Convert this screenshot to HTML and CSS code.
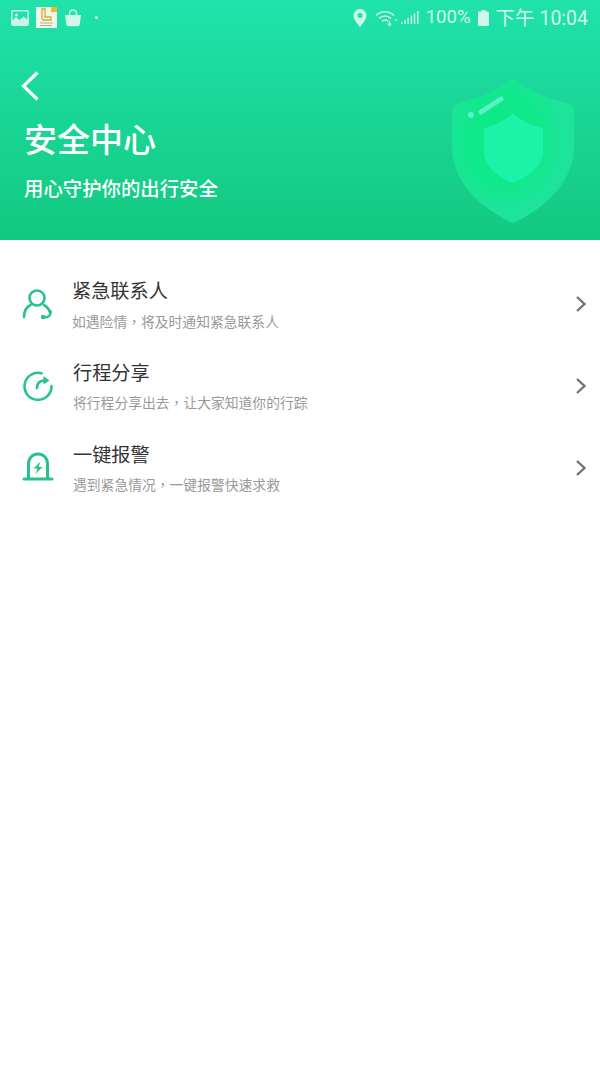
FILE: index.html
```html
<!DOCTYPE html>
<html lang="zh-CN">
<head>
<meta charset="utf-8">
<title>安全中心</title>
<link rel="stylesheet" href="styles.css">
</head>
<body>
<div class="page">
  <header class="hero">
    <div class="status">
      <div class="status-left">
        <svg class="ic-photo" viewBox="0 0 18 16"><rect x=".8" y=".8" width="16.4" height="14.4" rx="1.5" fill="none" stroke="#c9f6e6" stroke-width="1.6"/><path d="M1 15V11l4-4 3.500 3 4-3.500L17 10v5z" fill="#c9f6e6"/><circle cx="5.500" cy="5" r="1.500" fill="#c9f6e6"/></svg>
        <svg class="ic-app" viewBox="0 0 21 21"><rect width="21" height="21" fill="#f3f6ea"/><path d="M6 2h3v8h6v3H7l-1-2z" fill="none" stroke="#dba92e" stroke-width="1.300"/><path d="M4 16h13M4 18.500h12" stroke="#a9b58c" stroke-width="1"/><rect x="15" y="0" width="6" height="5" fill="#f5b92d"/></svg>
        <svg class="ic-bag" viewBox="0 0 18 18"><path d="M1 6h16l-1.300 9.500a2 2 0 0 1-2 1.700H4.300a2 2 0 0 1-2-1.700z" fill="#d2f7ea"/><path d="M5.500 7V4.500a3.500 3.500 0 0 1 7 0V7" fill="none" stroke="#d2f7ea" stroke-width="1.300"/></svg>
        <span class="dot"></span>
      </div>
      <div class="status-right">
        <svg class="ic-pin" viewBox="0 0 14 18"><path fill-rule="evenodd" d="M7 0a6.500 6.500 0 0 1 6.500 6.500C13.500 11 7 18 7 18S.5 11 .5 6.500A6.500 6.500 0 0 1 7 0zm0 4a2.500 2.500 0 1 0 0 5 2.500 2.500 0 0 0 0-5z" fill="#c9f6e6"/></svg>
        <svg class="ic-wifi" viewBox="0 0 24 18"><g fill="none" stroke="#c9f6e6" stroke-width="1.500"><path d="M1 6.500c5-5 13-5 18 0M4 9.500c3.500-3.200 8.500-3.200 12 0M7 12.300c2-1.600 4-1.600 6 0"/></g><path d="M14.500 12v4M12.800 14.500l1.700 2 1.700-2" fill="none" stroke="#c9f6e6" stroke-width="1.200"/><circle cx="21" cy="11" r="1" fill="#c9f6e6"/></svg>
        <svg class="ic-signal" viewBox="0 0 18 14"><g fill="#c9f6e6"><rect x="0" y="11" width="1.500" height="2"/><rect x="3.200" y="9" width="1.500" height="4"/><rect x="6.400" y="7" width="1.500" height="6"/><rect x="9.600" y="4.500" width="1.500" height="8.500"/><rect x="12.800" y="2.500" width="1.500" height="10.500"/><rect x="16" y="0" width="1.500" height="13"/></g></svg>
        <span class="pct">100%</span>
        <svg class="ic-batt" viewBox="0 0 11 16"><path d="M3.500 0h4v1.500H10a1 1 0 0 1 1 1V15a1 1 0 0 1-1 1H1a1 1 0 0 1-1-1V2.500a1 1 0 0 1 1-1h2.500z" fill="#d2f7ea"/></svg>
        <span class="clock">下午 10:04</span>
      </div>
    </div>
    <svg class="back" viewBox="0 0 20 32"><path d="M17.500 2.500 3.500 16l14 13.500" fill="none" stroke="#fff" stroke-width="3.200"/></svg>
    <h1 class="title">安全中心</h1>
    <p class="slogan">用心守护你的出行安全</p>
    <svg class="shield" viewBox="0 0 126 146">
      <defs>
        <radialGradient id="glow" cx=".42" cy=".42" r=".5"><stop offset="0" stop-color="#0bea84"/><stop offset=".55" stop-color="#0fe98a"/><stop offset="1" stop-color="#1de49a"/></radialGradient>
      </defs>
      <path d="M63 0C72 8 92 20 117 25Q124 27 124 33V68C124 106 92 132 63 145 34 132 2 106 2 68V33Q2 27 9 25C34 20 54 8 63 0z" fill="url(#glow)"/>
      <path d="M63 35C70 42 82 48 93 50V74C93 88 78 99 63 105 48 99 34 88 34 74V50C44 48 56 42 63 35z" fill="#1cf2a8"/>
      <path d="M31 34 51 21" stroke="#5cf0c8" stroke-width="5" stroke-linecap="round"/>
      <circle cx="21" cy="37" r="3" fill="#5cf0c8"/>
    </svg>
  </header>
  <main class="list">
    <div class="row">
      <svg class="row-icon" viewBox="0 0 32 32"><g fill="none" stroke="#27c48a" stroke-width="2.600" stroke-linecap="round"><circle cx="15" cy="10" r="7.500"/><path d="M2 29c0-6 2.500-10 6.500-12M22 17c2 1 3.500 2.500 5 5"/></g><path d="M28.500 24c.5 3-2 5.500-6 5.500" fill="none" stroke="#27c48a" stroke-width="2.600" stroke-linecap="round"/><circle cx="21" cy="29" r="2.200" fill="#27c48a"/><circle cx="28" cy="23.500" r="1.800" fill="#27c48a"/></svg>
      <div class="row-text">
        <div class="row-title">紧急联系人</div>
        <div class="row-sub">如遇险情<span class="comma" lang="zh-Hant">，</span>将及时通知紧急联系人</div>
      </div>
      <svg class="chev" viewBox="0 0 12 18"><path d="M2 2l7.500 7L2 16" fill="none" stroke="#6d7273" stroke-width="2.300"/></svg>
    </div>
    <div class="row">
      <svg class="row-icon" viewBox="0 0 32 32"><path d="M19.500 3.300A13.500 13.500 0 1 0 29.500 16" fill="none" stroke="#27c48a" stroke-width="2.600" stroke-linecap="round"/><path d="M15 18c0-4 2-7 7-7.500" fill="none" stroke="#27c48a" stroke-width="2.600" stroke-linecap="round"/><path d="M21.500 6l6 4.500-6 4z" fill="#27c48a"/></svg>
      <div class="row-text">
        <div class="row-title">行程分享</div>
        <div class="row-sub">将行程分享出去<span class="comma" lang="zh-Hant">，</span>让大家知道你的行踪</div>
      </div>
      <svg class="chev" viewBox="0 0 12 18"><path d="M2 2l7.500 7L2 16" fill="none" stroke="#6d7273" stroke-width="2.300"/></svg>
    </div>
    <div class="row">
      <svg class="row-icon" viewBox="0 0 32 32"><path d="M6.500 26V11.500a9.500 9.500 0 0 1 19 0V26" fill="none" stroke="#27c48a" stroke-width="3"/><path d="M2 27h28" stroke="#27c48a" stroke-width="3" stroke-linecap="round"/><path d="M18.500 9.500l-7 7h4l-2 5.500 7-7h-4z" fill="#27c48a"/></svg>
      <div class="row-text">
        <div class="row-title">一键报警</div>
        <div class="row-sub">遇到紧急情况<span class="comma" lang="zh-Hant">，</span>一键报警快速求救</div>
      </div>
      <svg class="chev" viewBox="0 0 12 18"><path d="M2 2l7.500 7L2 16" fill="none" stroke="#6d7273" stroke-width="2.300"/></svg>
    </div>
  </main>
</div>
</body>
</html>
```
FILE: styles.css
```css
* { box-sizing: border-box; }
html, body { margin: 0; padding: 0; }
body {
  background: #fff;
  font-family: "Noto Sans CJK SC", Roboto, sans-serif;
}
.page { width: 600px; height: 1067px; overflow: hidden; }

.hero {
  position: relative;
  height: 240px;
  padding: 7px 12px 0 11px;
  background: linear-gradient(180deg, #20e2ab 0%, #13c97f 100%);
  color: #fff;
}
.status { display: flex; justify-content: space-between; align-items: center; height: 21px; }
.status-left, .status-right { display: flex; align-items: center; }
.ic-photo { width: 18px; height: 16px; margin-right: 7px; }
.ic-app { width: 21px; height: 21px; margin-right: 7px; }
.ic-bag { width: 18px; height: 18px; }
.dot { width: 3px; height: 3px; margin-left: 13px; border-radius: 50%; background: #c9f6e6; }
.ic-pin { width: 14px; height: 18px; margin-right: 8px; }
.ic-wifi { width: 24px; height: 18px; margin-right: 2px; }
.ic-signal { width: 18px; height: 14px; margin-right: 7px; }
.pct, .clock { font-family: Roboto, "Noto Sans CJK SC", sans-serif; color: #d2f7ea; line-height: 21px; }
.pct { font-size: 18.6px; }
.clock { font-size: 19.5px; margin-top: 1px; }
.ic-batt { width: 11px; height: 16px; margin: 0 7px 0 7px; }

.back { display: block; width: 20px; height: 32px; margin: 42px 0 0 9px; }
.title {
  margin: 13px 0 0 13px;
  font-size: 33px;
  line-height: 46px;
  font-weight: 500;
}
.slogan {
  margin: 13px 0 0 13px;
  font-size: 19.4px;
  line-height: 28px;
  font-weight: 500;
}
.shield { position: absolute; left: 450px; top: 78px; width: 126px; height: 146px; filter: blur(.6px); }

.list { padding-top: 23px; }
.row { display: flex; align-items: center; height: 82px; padding: 0 13px 0 22px; }
.row-icon { flex: none; width: 32px; height: 32px; }
.row-text { flex: 1; margin-left: 18px; }
.row + .row .row-text { margin-left: 19px; }
.row-title { margin-top: -2px; font-size: 19.2px; line-height: 28px; color: #333; }
.row-sub { margin-top: 7px; font-size: 13.8px; line-height: 20px; color: #999; }
.row + .row .row-sub { margin-top: 6px; }
.comma { font-family: "Noto Sans CJK TC", sans-serif; }
.chev { flex: none; width: 12px; height: 18px; }
```
